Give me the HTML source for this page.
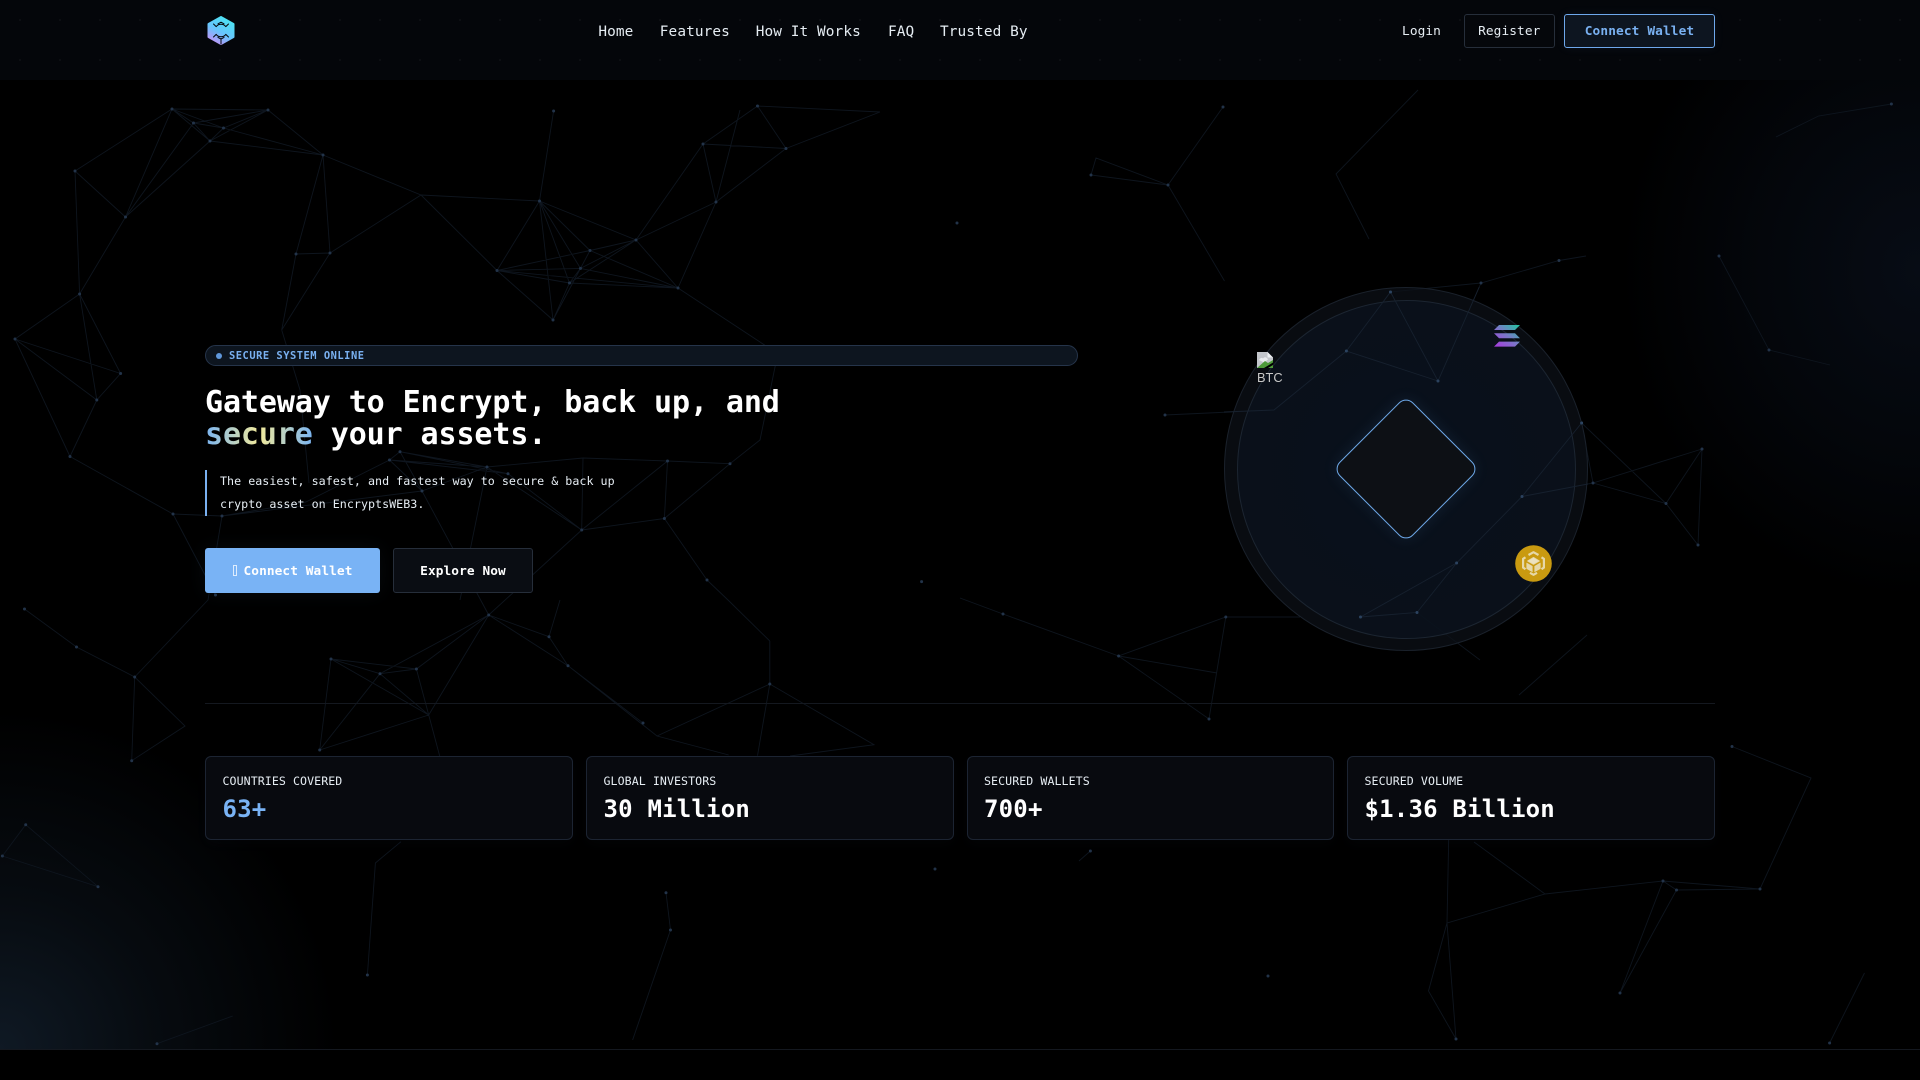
<!DOCTYPE html>
<html lang="en">
<head>
<meta charset="utf-8">
<title>EncryptsWEB3</title>
<style>
*{box-sizing:border-box;margin:0;padding:0}
html,body{width:1920px;height:1080px;overflow:hidden;background:#000}
body{position:relative;font-family:"DejaVu Sans Mono","Liberation Mono",monospace;color:#fff}
.abs{position:absolute;white-space:nowrap}
#hero{left:0;top:0;width:1920px;height:1050px;border-bottom:1px solid #14181f;
background:
radial-gradient(ellipse 340px 340px at 0 1049px,#0f1924 0%,rgba(15,25,36,.45) 45%,rgba(15,25,36,0) 100%),
radial-gradient(ellipse 300px 330px at 1920px 270px,#070c15 0%,rgba(7,12,21,.5) 55%,rgba(7,12,21,0) 100%),#000}
#net{left:0;top:0;width:1920px;height:1080px}
nav{left:0;top:0;width:1920px;height:80px;background:#04060a radial-gradient(circle at 20px 20px,rgba(255,255,255,.035) .8px,transparent 1.2px) 0 0/40px 40px}
.lnk{top:22px;font-size:14.4px;line-height:20px;letter-spacing:.1px;color:#e6edf3}
.btn{display:flex;align-items:center;justify-content:center;font-size:12.8px;letter-spacing:.08px;border-radius:3px}
.badge{left:205px;top:345px;width:873px;height:21px;border:1px solid #25344a;border-radius:11px;background:#0d151f}
.badge i{position:absolute;left:10px;top:6.5px;width:6px;height:6px;border-radius:50%;background:#5f97da}
.badge b{position:absolute;left:23px;top:1px;line-height:19px;font-size:10.4px;letter-spacing:.52px;color:#79b0f0;font-weight:700}
h1{left:205px;top:387px;font-size:30px;line-height:32px;letter-spacing:-.1px;font-weight:700;color:#fff}
h1 span{background:linear-gradient(90deg,#79b4f2 0%,#f2ea9c 50%,#79b4f2 100%);-webkit-background-clip:text;background-clip:text;color:transparent}
.para{left:205px;top:470px;height:46px;border-left:2.5px solid #79b0f0;padding-left:13px;font-size:11.68px;line-height:23px;letter-spacing:.02px;color:#e6edf3}
.card{top:756px;width:367.5px;height:84px;background:#080a0f;border:1px solid #1c2432;border-radius:6px;box-shadow:0 4px 14px rgba(120,170,240,.025)}
.card small{position:absolute;left:16.5px;top:17px;font-size:11.6px;line-height:14px;letter-spacing:.07px;color:#e6edf3}
.card b{position:absolute;left:16.5px;top:38px;font-size:24px;line-height:28px;letter-spacing:.2px;font-weight:700;color:#fff}
.ring{left:1224px;top:287px;width:364px;height:364px;border-radius:50%;background:rgba(13,17,23,.72);border:1px solid #1a212b}
.inner{left:1237px;top:300px;width:339px;height:339px;border-radius:50%;background:radial-gradient(circle at 50% 50%,rgba(8,18,32,.75),rgba(11,18,28,.7));border:1px solid #1c2531}
.dia{left:1354px;top:417px;width:104px;height:104px;transform:rotate(45deg);background:#0d1015;border:1px solid #6ea8e8;border-radius:10px;box-shadow:0 0 16px rgba(110,168,232,.1)}
</style>
</head>
<body>
<div class="abs" id="hero"></div>

<svg class="abs" id="net" viewBox="0 0 1920 1080" fill="none" aria-hidden="true">
<path stroke="#0e151e" stroke-width=".9" d="M172 109L268 110M172 109L193.5 123M172 109L223.5 128M172 109L210 141M193.5 123L268 110M193.5 123L223.5 128M223.5 128L268 110M210 141L268 110M193.5 123L210 141M223.5 128L210 141M223.5 128L323 155M268 110L323 155M210 141L323 155M75 171L172 109M125.5 217L172 109M125.5 217L193.5 123M125.5 217L210 141M75 171L125.5 217M75 171L79.6 294M125.5 217L79.6 294M323 155L421 195M323 155L296 254M323 155L330 253M421 195L539.5 201M421 195L330 253M421 195L497 270.5M296 254L330 253M296 254L281.7 330M330 253L281.7 330M539.5 201L553.6 111M539.5 201L497 270.5M539.5 201L590 250.5M539.5 201L580.5 268.4M539.5 201L569.5 283M539.5 201L553 320M539.5 201L636 240M636 240L716 202M636 240L590 250.5M636 240L580.5 268.4M636 240L569.5 283M636 240L678 288M636 240L703 144M716 202L703 144M716 202L786 148.5M716 202L678 288M703 144L757.5 106M703 144L786 148.5M757.5 106L786 148.5M757.5 106L880 112M880 112L786 148.5M740 110L716 202M497 270.5L590 250.5M497 270.5L580.5 268.4M497 270.5L569.5 283M497 270.5L678 288M497 270.5L553 320M590 250.5L553 320M580.5 268.4L569.5 283M580.5 268.4L553 320M569.5 283L553 320M678 288L569.5 283M590 250.5L580.5 268.4M580.5 268.4L678 288M590 250.5L678 288M678 288L760 342L777.7 354M281.7 330L300 390L309 483M777.7 354L760 440L730 463.7M730 463.7L664.4 518.5M730 463.7L667.5 461M667.5 461L664.4 518.5M583 458L667.5 461M583 458L581.7 530M664.4 518.5L581.7 530M667.5 461L581.7 530M664.4 518.5L707 580M583 458L487 467M487 467L400 451.7M400 451.7L389.5 460M400 451.7L508 473.7M389.5 460L487 467M389.5 460L508 473.7M389.5 460L422 491M400 451.7L422 491M422 491L222 516M487 467L422 491M487 467L581.7 530M508 473.7L581.7 530M389.5 460L306 502M306 502L222 516M173 514L222 516M306 502L389.5 460M79.6 294L15 339M79.6 294L120.6 373.5M79.6 294L96.8 400M15 339L120.6 373.5M15 339L96.8 400M120.6 373.5L96.8 400M96.8 400L70 456.5M15 339L70 456.5M70 456.5L173 514M173 514L215.5 595M222 516L208 600M422 491L488.7 615M487 467L460 600M24.5 609L76.5 647L134.7 677L185 726L131.7 760.7L134.7 677M134.7 677L208 600M25.7 824.7L2.4 856L98 886.7L25.7 824.7M157 1043.7L232.7 1016M367.4 975L375.4 863L401 841.7M331 659L380 673.7M331 659L416.4 669M380 673.7L416.4 669M331 659L428.7 715M380 673.7L428.7 715M416.4 669L439.7 756M319.7 750L331 659M319.7 750L380 673.7M319.7 750L428.7 715M416.4 669L488.7 615M428.7 715L488.7 615M380 673.7L488.7 615M488.7 615L549 636.7L568 665.7L488.7 615M488.7 615L581.7 530M549 636.7L560 600M568 665.7L657 736L728.7 755M657 736L769.8 684M643 723L568 665.7M769.8 641L769.8 684L757.5 755.7M769.8 684L874 744.7L790 756M769.8 641L728 600L707 580M666 892.7L670.5 930L632.6 1040M1223 107L1168 185L1096 158L1091 175L1168 185M1168 185L1224.5 281M1418 90L1336 174L1369 239M1891.4 104L1818.5 116L1776 137M1719 256L1769 350L1830 365M1586 256L1559 260.5L1481 283L1390.5 292M1481 283L1438 381L1390.5 292L1346.4 351L1438 381M1346.4 351L1274 410L1165 415M1581.6 423L1593 483L1522 496.5L1581.6 423M1522 496.5L1456.6 563L1417 612.5L1360.5 617L1456.6 563M1417 612.5L1480 660M1225.8 617L1209 719L1118.6 656L1225.8 617L1300 617M1118.6 656L1217 673M1118.6 656L1003 614L960 598M1593 483L1666 503.5L1702 449L1698 545L1666 503.5M1702 449L1593 483M1581.6 423L1666 503.5M1587 635L1519 695M1732 746.5L1811 778L1760 889L1676.5 890L1663 881L1760 889M1663 881L1545 894L1447 923L1448.7 839M1447 923L1428.5 991L1456 1039L1447 923M1474 842L1545 894M1676.5 890L1620 993M1663 881L1620 993M1829.6 1043L1864.5 973M1090.4 851L1079 861"/>
<path stroke="#223349" stroke-width="3" stroke-linecap="round" d="M172 109h0M268 110h0M193.5 123h0M223.5 128h0M210 141h0M323 155h0M75 171h0M125.5 217h0M539.5 201h0M553.6 111h0M757.5 106h0M703 144h0M786 148.5h0M716 202h0M636 240h0M590 250.5h0M580.5 268.4h0M497 270.5h0M569.5 283h0M678 288h0M553 320h0M296 254h0M330 253h0M79.6 294h0M15 339h0M120.6 373.5h0M96.8 400h0M70 456.5h0M957 223h0M400 451.7h0M389.5 460h0M487 467h0M508 473.7h0M667.5 461h0M730 463.7h0M664.4 518.5h0M581.7 530h0M707 580h0M921.6 581.6h0M422 491h0M222 516h0M173 514h0M215.5 595h0M24.5 609h0M76.5 647h0M134.7 677h0M131.7 760.7h0M25.7 824.7h0M2.4 856h0M98 886.7h0M157 1043.7h0M367.4 975h0M331 659h0M380 673.7h0M416.4 669h0M319.7 750h0M488.7 615h0M549 636.7h0M568 665.7h0M643 723h0M769.8 684h0M670.5 930h0M666 892.7h0M935 869h0M1223 107h0M1168 185h0M1091 175h0M1891.4 104h0M1719 256h0M1769 350h0M1559 260.5h0M1481 283h0M1390.5 292h0M1346.4 351h0M1438 381h0M1165 415h0M1581.6 423h0M1593 483h0M1522 496.5h0M1666 503.5h0M1702 449h0M1698 545h0M1456.6 563h0M1417 612.5h0M1360.5 617h0M1225.8 617h0M1118.6 656h0M1209 719h0M1003 614h0M1732 746.5h0M1760 889h0M1676.5 890h0M1663 881h0M1620 993h0M1456 1039h0M1829.6 1043h0M1090.4 851h0M1268 976h0"/>
</svg>

<nav class="abs">
  <svg class="abs" style="left:207px;top:16px" width="28" height="29" viewBox="0 0 28 29">
    <defs><linearGradient id="lg" x1=".75" y1="0" x2=".2" y2="1"><stop offset="0" stop-color="#4ae4f2"/><stop offset=".55" stop-color="#68c4fc"/><stop offset="1" stop-color="#c690f6"/></linearGradient></defs>
    <path d="M14 1L26.5 8V21L14 28L1.5 21V8Z" fill="url(#lg)" stroke="url(#lg)" stroke-width="2" stroke-linejoin="round"/>
    <path d="M9.2 10.6A6 6 0 0 1 18.8 10.6M9.2 18.4A6 6 0 0 0 18.8 18.4M9.2 10.6L6.5 8M18.8 10.6L21.5 8M9.2 18.4L6.5 21M18.8 18.4L21.5 21M11 7.8L14 6.2L17 7.8M11 21.4L14 23L17 21.4M14 28V23" stroke="#04060a" stroke-width="1" fill="none" stroke-linecap="round"/>
  </svg>
  <span class="abs lnk" style="left:598.4px">Home</span>
  <span class="abs lnk" style="left:659.8px">Features</span>
  <span class="abs lnk" style="left:755.7px">How It Works</span>
  <span class="abs lnk" style="left:888px">FAQ</span>
  <span class="abs lnk" style="left:940px">Trusted By</span>
  <div class="abs btn" style="left:1391.5px;top:14px;width:60px;height:34px;color:#e6edf3">Login</div>
  <div class="abs btn" style="left:1464px;top:14px;width:90.5px;height:34px;border:1px solid #262e3a;background:#05070b;color:#e6edf3">Register</div>
  <div class="abs btn" style="left:1564px;top:14px;width:151px;height:34px;border:1px solid #6ea8ec;background:#0d1520;color:#79b0f0;font-weight:700;letter-spacing:.12px;box-shadow:0 0 10px rgba(110,168,236,.08)">Connect Wallet</div>
</nav>

<div class="abs badge"><i></i><b>SECURE SYSTEM ONLINE</b></div>
<h1 class="abs">Gateway to Encrypt, back up, and<br><span>secure</span> your assets.</h1>
<div class="abs para">The easiest, safest, and fastest way to secure &amp; back up<br>crypto asset on EncryptsWEB3.</div>

<div class="abs btn" style="left:205px;top:548px;width:175px;height:45px;background:#79b3f5;color:#fff;font-weight:700;box-shadow:0 0 20px rgba(121,179,245,.06);padding-top:1px"><span style="position:absolute;left:27.5px;top:17px;width:4px;height:11px;border:1px solid rgba(255,255,255,.75)"></span><span style="position:absolute;left:38.5px">Connect Wallet</span></div>
<div class="abs btn" style="left:393px;top:548px;width:140px;height:45px;background:#0a0d13;border:1px solid #262e3a;color:#fff;font-weight:700;padding-top:2px">Explore Now</div>

<div class="abs" style="left:205px;top:703px;width:1510px;height:1px;background:#14181f"></div>

<div class="abs card" style="left:205px"><small>COUNTRIES COVERED</small><b style="color:#79b3f5">63+</b></div>
<div class="abs card" style="left:586px"><small>GLOBAL INVESTORS</small><b>30 Million</b></div>
<div class="abs card" style="left:966.5px"><small>SECURED WALLETS</small><b>700+</b></div>
<div class="abs card" style="left:1347px"><small>SECURED VOLUME</small><b>$1.36 Billion</b></div>

<div class="abs ring"></div>
<div class="abs inner"></div>
<svg class="abs" style="left:1224px;top:287px;opacity:.9" width="364" height="364" viewBox="1224 287 364 364" fill="none"><path stroke="#182230" stroke-width=".9" d="M1481 283L1438 381L1390.5 292L1346.4 351L1438 381M1346.4 351L1274 410L1224 412M1581.6 423L1522 496.5L1456.6 563L1417 612.5L1360.5 617L1456.6 563M1522 496.5L1588 484"/><path stroke="#2f4866" stroke-width="3" stroke-linecap="round" d="M1390.5 292h0M1346.4 351h0M1438 381h0M1581.6 423h0M1522 496.5h0M1456.6 563h0M1417 612.5h0M1360.5 617h0"/></svg>
<div class="abs dia"></div>

<svg class="abs" style="left:1257px;top:352px" width="16" height="16" viewBox="0 0 16 16">
  <path d="M0 0H10.5L16 5.5V16H0Z" fill="#c3c6cb"/>
  <path d="M10.5 0L16 5.5H10.5Z" fill="#eef0f2"/>
  <path d="M2 8C3.5 5.5 5 5.5 6 6.5C7.5 4.5 10 5 11 7.5L7 10.5Z" fill="#eaecef"/>
  <path d="M0 16L8 9L11 11L16 8V16Z" fill="#4e9a3a"/>
  <path d="M7 16L16 10.5V13L11 16Z" fill="#000"/>
</svg>
<div class="abs" style="left:1257px;top:370px;font-family:'Liberation Sans',sans-serif;font-size:12.8px;line-height:15px;color:#c8c8c8">BTC</div>

<svg class="abs" style="left:1494px;top:325px" width="26" height="22" viewBox="0 0 26 22">
  <defs><linearGradient id="sol" x1="1" y1="0" x2="0" y2="1"><stop offset="0" stop-color="#1fc8a0"/><stop offset=".5" stop-color="#7a78c8"/><stop offset="1" stop-color="#aa38e0"/></linearGradient></defs>
  <path fill="url(#sol)" d="M5 0H26L21 5H0ZM0 8.3H21L26 13.3H5ZM5 16.6H26L21 21.6H0Z"/>
</svg>

<svg class="abs" style="left:1514.5px;top:544.5px" width="37" height="37" viewBox="0 0 37 37">
  <circle cx="18.5" cy="18.5" r="18.3" fill="#c99a10"/>
  <g transform="translate(6.5 5.8)" fill="none" stroke="#e6d8a8" stroke-width="2.2" stroke-linejoin="round">
    <path d="M7 4.2L12 1.4L17 4.2M20 6.5L22.4 8V16.8L20 18.4M4 6.5L1.6 8V16.8L4 18.4M8.5 22L12 24L15.5 22"/>
    <path d="M12 6.6L18 10.2L12 13.6L6 10.2Z" fill="#ece2c0" stroke-width=".8"/>
    <path d="M5.2 12.2L10.8 15.4V21L5.2 17.8Z" fill="#e6d8a8" stroke-width=".6"/>
    <path d="M18.8 12.2L13.2 15.4V21L18.8 17.8Z" fill="#e6d8a8" stroke-width=".6"/>
  </g>
</svg>
</body>
</html>
